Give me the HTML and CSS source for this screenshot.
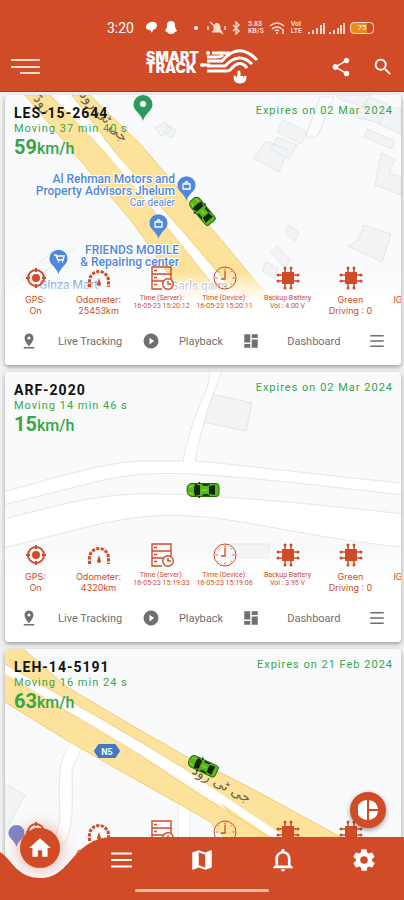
FILE: index.html
```html
<!DOCTYPE html>
<html lang="en">
<head>
  <meta charset="UTF-8" />
  <meta name="viewport" content="width=device-width, initial-scale=1.0"/>
  <title>Smart Track</title>
  <link rel="stylesheet" href="styles.css">
</head>
<body>
  <!-- shared icons -->
  <svg class="defs" aria-hidden="true">
    <symbol id="gps" viewBox="0 0 24 24">
      <circle cx="12" cy="12" r="8" fill="none" stroke="currentColor" stroke-width="2"/>
      <circle cx="12" cy="12" r="4" fill="currentColor"/>
      <path d="M12 2v4M12 18v4M2 12h4M18 12h4" stroke="currentColor" stroke-width="2"/>
    </symbol>
    <symbol id="odo" viewBox="0 0 24 24">
      <path d="M2.500 21v-6a9.500 9.500 0 0 1 19 0v6" fill="none" stroke="currentColor" stroke-width="3" stroke-dasharray="3.200 1.300"/>
      <path d="M12 12l2 6a2 2 0 1 1-4 0z" fill="currentColor"/>
    </symbol>
    <symbol id="server" viewBox="0 0 24 24">
      <g fill="none" stroke="currentColor" stroke-width="1.400">
        <path d="M12 23H2V1h19v12M2 8h19M2 15h12M4 4.500h3M4 11.500h3M4 18.500h3"/>
        <circle cx="18" cy="18" r="5.300"/><path d="M18 15v3h3"/>
      </g>
    </symbol>
    <symbol id="clock" viewBox="0 0 24 24">
      <g fill="none" stroke="currentColor" stroke-width="1">
        <circle cx="12" cy="12" r="11"/>
        <path d="M12 5v8H8" stroke-width="1.300"/>
        <path d="M12 2.500v2M12 19.500v2M2.500 12h2M19.500 12h2M5.300 5.300l1 1M17.700 17.700l1 1M18.700 5.300l-1 1M5.300 18.700l1-1"/>
      </g>
    </symbol>
    <symbol id="chip" viewBox="0 0 24 24">
      <rect x="6" y="6" width="12" height="12" fill="currentColor"/>
      <path d="M9 2v20M15 2v20M2 9h20M2 15h20" stroke="currentColor" stroke-width="1.600"/>
      <g fill="currentColor">
        <circle cx="9" cy="2" r="1.500"/><circle cx="15" cy="2" r="1.500"/><circle cx="9" cy="22" r="1.500"/><circle cx="15" cy="22" r="1.500"/>
        <circle cx="2" cy="9" r="1.500"/><circle cx="2" cy="15" r="1.500"/><circle cx="22" cy="9" r="1.500"/><circle cx="22" cy="15" r="1.500"/>
      </g>
    </symbol>
    <symbol id="key" viewBox="0 0 24 24">
      <circle cx="12" cy="13" r="8" fill="none" stroke="currentColor" stroke-width="2"/>
      <path d="M12 3v9" stroke="currentColor" stroke-width="2"/>
    </symbol>
    <symbol id="marker" viewBox="0 0 24 24">
      <path fill="currentColor" d="M18 8c0-3.310-2.690-6-6-6S6 4.690 6 8c0 4.500 6 11 6 11s6-6.500 6-11zm-8 0a2 2 0 1 1 4 0 2 2 0 0 1-4 0zM5 20v2h14v-2z"/>
    </symbol>
    <symbol id="play" viewBox="0 0 24 24">
      <path fill="currentColor" d="M12 2a10 10 0 1 0 0 20 10 10 0 0 0 0-20zm-2 14.500v-9l6 4.500z"/>
    </symbol>
    <symbol id="dash" viewBox="0 0 24 24">
      <path fill="currentColor" d="M3 3h8v11H3zM3 16h8v5H3zM13 10h8v11h-8zM13 3h8v5h-8z"/>
    </symbol>
    <symbol id="menu" viewBox="0 0 24 24">
      <path d="M3 5h18M3 12h18M3 19h18" stroke="currentColor" stroke-width="2"/>
    </symbol>
    <symbol id="car" viewBox="0 0 34 16">
      <path d="M5 1.500h25q3 0 3 3v7q0 3-3 3H6Q1 14 1 8t4-6.500z" fill="#58b818" stroke="#246b08"/>
      <path d="M9 2l5 1.500v9L9 14q-2-6 0-12z" fill="#14240f"/>
      <path d="M16 2h8l-2 2h-5zM16 14h8l-2-2h-5z" fill="#1d3a12"/>
      <path d="M23 4l6-1v10l-6-1z" fill="#14240f"/>
      <path d="M13 0l1 2M13 16l1-2" stroke="#14240f" stroke-width="1.500"/>
      <path d="M3 5l4-1M3 11l4 1M16 8h5" stroke="#9be04a"/>
    </symbol>
    <symbol id="pin" viewBox="0 0 20 26">
      <path fill="currentColor" d="M10 0a9.500 9.500 0 0 1 9.500 9.500C19.500 16 12 18 10 26 8 18 .5 16 .5 9.500A9.500 9.500 0 0 1 10 0z"/>
    </symbol>
    <linearGradient id="fade" x1="0" y1="0" x2="0" y2="1">
      <stop offset="0" stop-color="#fff" stop-opacity="0"/>
      <stop offset="1" stop-color="#fff"/>
    </linearGradient>
  </svg>

  <header class="header">
    <div class="status">
      <span class="time">3:20</span>
      <svg width="44" height="14" viewBox="0 0 44 14" fill="#fff">
        <path d="M6 1q5-1 6 3 0 4-4 5l-1 3-2-3Q0 9 1 5q1-3 5-4z"/>
        <path d="M26 0q4 0 4 4v2l2 4-2 1q-1 2-4 2t-4-2l-2-1 2-4V4q0-4 4-4z"/>
      </svg>
      <span class="dot"></span>
      <svg width="36" height="14" viewBox="0 0 36 14" fill="none" stroke="#fbd9cc">
        <path d="M5 11h10l-2-3V6q0-3-3-4-3 1-3 4v3z" fill="#fbd9cc"/>
        <path d="M3 1l13 12M1 5v4M18 5v4" stroke-width="1.400"/>
        <path d="M26 4l6 6-3 3V1l3 3-6 6" stroke-width="1.400"/>
      </svg>
      <span class="tiny">5.83<br>KB/S</span>
      <svg width="17" height="14" viewBox="0 0 17 14" fill="none" stroke="#fbd9cc" stroke-width="1.600">
        <path d="M1 5q7-6 14 0M3 8q5-4 10 0M6 10q2-2 4 0"/><path d="M8 11v2M14 8v5"/>
      </svg>
      <span class="tiny">VoI<br>LTE</span>
      <svg width="38" height="14" viewBox="0 0 38 14" stroke="#fbd9cc" stroke-width="2">
        <path d="M2 13v-2M6 13V9M10 13V7M14 13V4M17 13V2M23 13v-2M27 13V9M31 13V7M34 13V4M37 13V2"/>
      </svg>
      <span class="battery">75</span>
    </div>
    <div class="appbar">
      <button class="icon-btn" aria-label="Open menu">
        <svg width="30" height="18" viewBox="0 0 30 18" stroke="#fbd9cc" stroke-width="2"><path d="M0 2h29M0 9h29M9 15h20"/></svg>
      </button>
      <div class="logo">
        <h1>SMART<br>TRACK</h1>
        <svg width="60" height="36" viewBox="0 0 60 36" fill="none" stroke="#fff">
          <circle cx="9" cy="4" r="2" fill="#fff" stroke="none"/>
          <circle cx="3" cy="16" r="2" fill="#fff" stroke="none"/>
          <path d="M13 4h18M8 8h10q4 0 6-2M8 12h15Q40-8 58 11M8 17h18Q40 2 53 15M3 16h8M8 22h20q3 0 5-3 8-9 15 0" stroke-width="3"/>
          <path d="M40 23v6M36 28q0 5 5 5 5 0 5-5" stroke-width="3" stroke-linecap="round"/>
          <path d="M38 27h6v5h-6z" fill="#fff" stroke="none"/>
        </svg>
      </div>
      <div class="tools">
        <button class="icon-btn" aria-label="Share">
          <svg width="22" height="22" viewBox="0 0 24 24" fill="#fff"><path d="M18 16.100c-.8 0-1.400.3-2 .8l-7.100-4.200a3 3 0 0 0 0-1.400L16 7.200A3 3 0 1 0 15 5l.1.700L8 9.800a3 3 0 1 0 0 4.400l7.100 4.200-.1.600a3 3 0 1 0 3-2.900z"/></svg>
        </button>
        <button class="icon-btn" aria-label="Search">
          <svg width="22" height="22" viewBox="0 0 24 24" fill="#fff"><path d="M15.500 14h-.8l-.3-.3A6.500 6.500 0 1 0 13.700 14.400l.3.300v.8l5 5 1.500-1.500zm-6 0a4.500 4.500 0 1 1 0-9 4.500 4.500 0 0 1 0 9z"/></svg>
        </button>
      </div>
    </div>
  </header>

  <main class="list">
    <article class="card">
      <svg class="map" viewBox="0 0 396 270" preserveAspectRatio="xMidYMin slice" aria-hidden="true">
        <g fill="#f1f3f4" stroke="#e3e6e8">
          <path d="M261 46l22 9-9 22-26-14zM278 25l24 12-6 12-24-12zM272 42l20 8-8 14-18-10z"/>
          <path d="M315 2l-14 38q5 6 12 0l16-38z" fill="#fafbfc"/>
          <path d="M330 0h35l-6 12-24-8zM350 22l14-20 20 8-9 18zM373 20l18-8 5 3v24l-23-10zM362 34l28 12-3 8-28-12zM376 58l14 6-6 14 12 4v18l-26-10zM353 145l6-15 27 9-9 28-34-16z"/>
          <path d="M280 138l4-8 10 8-4 8zM266 158l6-7 13 14-5 8zM257 176l4-9 12 6-4 10z"/>
          <path d="M150 33l10-6 6 8-10 6zM163 30l8 5-4 8-8-5z"/>
        </g>
        <path d="M0 200l52-48M0 208l70-55" stroke="#e3e6e8"/>
        <path d="M20 0h25l72 75 43 55 60 75h-38l-54-77zM67 0h18l53 52 66 78 68 82h-30l-59-70-58-65z" fill="#fde29b" stroke="#f2cf78"/>
        <path d="M56 0l65 76 49 59 62 74" fill="none" stroke="#fff" stroke-width="7"/>
        <g class="road-name">
          <text transform="translate(28 4) rotate(50)">روڈ</text>
          <text transform="translate(74 0) rotate(48)">جی ٹی روڈ</text>
        </g>
        <g color="#2c9a5a"><use href="#pin" x="128" y="0" width="20" height="26"/><circle cx="138" cy="9" r="3" fill="#fff"/></g>
        <g color="#5087e0">
          <use href="#pin" x="172" y="81" width="19" height="25"/>
          <use href="#pin" x="144" y="119" width="19" height="25"/>
          <use href="#pin" x="44" y="154" width="19" height="26"/>
        </g>
        <g fill="none" stroke="#fff" stroke-width="1.300">
          <path d="M178 89h7v5h-7zM179.500 89q2-5 4 0M150 127h7v5h-7zM151.500 127q2-5 4 0"/>
          <path d="M49 160h2l2 5h5l1-4h-7M53 167h1M57 167h1" stroke-width="1.600"/>
        </g>
        <g class="place">
          <text x="170" y="88" text-anchor="end">Al Rehman Motors and</text>
          <text x="170" y="100" text-anchor="end">Property Advisors Jhelum</text>
          <text x="170" y="111" text-anchor="end" class="sub">Car dealer</text>
          <text x="174" y="159" text-anchor="end">FRIENDS MOBILE</text>
          <text x="174" y="171" text-anchor="end">&amp; Repairing center</text>
          <text x="34" y="194">Ginza Mart</text>
          <text x="165" y="195" class="grey">Garls qaim</text>
        </g>
        <use href="#car" x="-16" y="-8" width="32" height="16" transform="translate(197 116) rotate(50)"/>
        <rect y="176" width="396" height="30" fill="url(#fade)"/>
        <rect y="205" width="396" height="65" fill="#fff"/>
      </svg>
      <div class="top">
        <div>
          <h2>LES-15-2644</h2>
          <p class="state">Moving 37 min 40 s</p>
          <p class="speed"><b>59</b>km/h</p>
        </div>
        <p class="expires">Expires on 02 Mar 2024</p>
      </div>
      <div class="metrics">
        <div><svg><use href="#gps"/></svg>GPS:<br>On</div>
        <div><svg><use href="#odo"/></svg>Odometer:<br>25453km</div>
        <div class="small"><svg><use href="#server"/></svg>Time (Server):<br>16-05-23 15:20:12</div>
        <div class="small"><svg><use href="#clock"/></svg>Time (Device):<br>16-05-23 15:20:11</div>
        <div class="small"><svg><use href="#chip"/></svg>Backup Battery<br>Vol : 4.00 V</div>
        <div><svg><use href="#chip"/></svg>Green<br>Driving : 0</div>
        <div><svg><use href="#key"/></svg>IGNITION</div>
      </div>
      <div class="actions">
        <button><svg><use href="#marker"/></svg><span>Live Tracking</span></button>
        <button><svg><use href="#play"/></svg><span>Playback</span></button>
        <button><svg><use href="#dash"/></svg><span>Dashboard</span></button>
        <button aria-label="More"><svg><use href="#menu"/></svg></button>
      </div>
    </article>

    <article class="card">
      <svg class="map" viewBox="0 0 396 270" preserveAspectRatio="xMidYMin slice" aria-hidden="true">
        <path d="M203 21l44 10-6 28-43-9z" fill="#f1f3f4" stroke="#e3e6e8"/>
        <path d="M220 172h44v14h-44z" fill="#f1f3f4" stroke="#e3e6e8"/>
        <g fill="#fff" stroke="#e3e6e8">
          <path d="M205-3c0 26-16 34-27 93h12c7-40 18-70 28-93z"/>
          <path d="M-2 120C60 103 100 90 140 89h50c60 5 140 16 208 22v12C320 114 250 106 200 103c-50-4-80 0-110 7L-2 133z"/>
          <path d="M-2 147C40 137 80 124 130 122c60-2 200 12 268 20v33C320 168 250 150 200 145c-50-4-70 0-110 8L-2 176z"/>
        </g>
        <path d="M179 88h10v4h-10z" fill="#fff"/>
        <use href="#car" x="181" y="110" width="34" height="16"/>
        <rect y="176" width="396" height="30" fill="url(#fade)"/>
        <rect y="205" width="396" height="65" fill="#fff"/>
      </svg>
      <div class="top">
        <div>
          <h2>ARF-2020</h2>
          <p class="state">Moving 14 min 46 s</p>
          <p class="speed"><b>15</b>km/h</p>
        </div>
        <p class="expires">Expires on 02 Mar 2024</p>
      </div>
      <div class="metrics">
        <div><svg><use href="#gps"/></svg>GPS:<br>On</div>
        <div><svg><use href="#odo"/></svg>Odometer:<br>4320km</div>
        <div class="small"><svg><use href="#server"/></svg>Time (Server):<br>16-05-23 15:19:33</div>
        <div class="small"><svg><use href="#clock"/></svg>Time (Device):<br>16-05-23 15:19:06</div>
        <div class="small"><svg><use href="#chip"/></svg>Backup Battery<br>Vol : 3.95 V</div>
        <div><svg><use href="#chip"/></svg>Green<br>Driving : 0</div>
        <div><svg><use href="#key"/></svg>IGNITION</div>
      </div>
      <div class="actions">
        <button><svg><use href="#marker"/></svg><span>Live Tracking</span></button>
        <button><svg><use href="#play"/></svg><span>Playback</span></button>
        <button><svg><use href="#dash"/></svg><span>Dashboard</span></button>
        <button aria-label="More"><svg><use href="#menu"/></svg></button>
      </div>
    </article>

    <article class="card">
      <svg class="map" viewBox="0 0 396 270" preserveAspectRatio="xMidYMin slice" aria-hidden="true">
        <path d="M-2 133l22 13-22 42z" fill="#f1f3f4" stroke="#e3e6e8"/>
        <path d="M67 92C54 110 53 120 55 170l-6 24h10c8-10 9-30 8-74l10-22zM173 150v45h12v-45z" fill="#fff" stroke="#e3e6e8"/>
        <path d="M-2-2h18l46 40 66 39 54 31c50 22 80 40 172 90h-94C240 180 220 162 200 132L138 94 62 50-2 14z" fill="#fde29b" stroke="#f2cf78"/>
        <path d="M-2 23l64 39 76 46 58 38 80 50h-50l-22-24-76-43-65-37L-2 52z" fill="#fde29b" stroke="#f2cf78"/>
        <path d="M-2 19l64 38 76 44 62 38 84 56" fill="none" stroke="#fff" stroke-width="8"/>
        <path d="M94 96h16l4 6-4 6H94l-4-6z" fill="#4379c4" stroke="#4379c4" stroke-width="2" stroke-linejoin="round"/>
        <text x="102" y="106" class="route" text-anchor="middle">N5</text>
        <g class="road-name"><text transform="translate(186 124) rotate(28)">جی ٹی روڈ</text></g>
        <use href="#car" x="-16" y="-8" width="32" height="16" transform="translate(198 117) rotate(25)"/>
        <g color="#7c86cf"><use href="#pin" x="3" y="176" width="17" height="22"/></g>
      </svg>
      <div class="top">
        <div>
          <h2>LEH-14-5191</h2>
          <p class="state">Moving 16 min 24 s</p>
          <p class="speed"><b>63</b>km/h</p>
        </div>
        <p class="expires">Expires on 21 Feb 2024</p>
      </div>
      <div class="metrics">
        <div><svg><use href="#gps"/></svg></div>
        <div><svg><use href="#odo"/></svg>Odometer:</div>
        <div class="small"><svg><use href="#server"/></svg>Time (Server):</div>
        <div class="small"><svg><use href="#clock"/></svg>Time (Device):</div>
        <div class="small"><svg><use href="#chip"/></svg>Backup Battery</div>
        <div><svg><use href="#chip"/></svg>Green</div>
      </div>
    </article>
  </main>

  <button class="fab" aria-label="Statistics">
    <svg width="20" height="20" viewBox="0 0 20 20" fill="#fff"><path d="M9 0v20A10 10 0 0 1 9 0zM11 0q8 1 9 9h-9zM11 11h9q-1 8-9 9z"/></svg>
  </button>

  <nav class="nav">
    <svg class="dip" width="120" height="63" viewBox="0 0 120 63" aria-hidden="true">
      <path fill="#d14b27" d="M0 15C12 22 16 41 41 41 72 41 72 0 114 0h6V63H0z"/>
    </svg>
    <a href="#" class="home" aria-label="Home"><svg viewBox="0 0 24 24"><path d="M10 20v-6h4v6h5v-8h3L12 3 2 12h3v8z"/></svg></a>
    <a href="#" aria-label="Vehicles"><svg viewBox="0 0 24 24"><path d="M3 5h19v2H3zM3 11h19v2H3zM3 17h19v2H3z"/></svg></a>
    <a href="#" aria-label="Map"><svg viewBox="0 0 24 24"><path d="M20.500 3l-.2 0L15 5.100 9 3 3.400 4.900c-.2.100-.4.300-.4.500v15.100c0 .3.200.5.500.5l.2 0L9 18.900l6 2.100 5.600-1.900c.2-.1.400-.3.400-.5V3.500c0-.3-.2-.5-.5-.5zM15 19l-6-2.100V5l6 2.100z"/></svg></a>
    <a href="#" aria-label="Alerts"><svg viewBox="0 0 24 24"><path d="M12 22.500a2 2 0 0 0 2-2h-4a2 2 0 0 0 2 2zm7-6V11c0-3.500-2-6-5.500-7V3a1.500 1.500 0 0 0-3 0v1C7 5 5 7.500 5 11v5.500l-2 2v1h18v-1zm-2.500.5h-9v-6c0-3 1.500-5 4.500-5s4.500 2 4.500 5z"/></svg></a>
    <a href="#" aria-label="Settings"><svg viewBox="0 0 24 24"><path d="M19.400 13a7.500 7.500 0 0 0 0-2l2.100-1.600c.2-.2.200-.4.100-.6l-2-3.500c-.1-.2-.4-.3-.6-.2l-2.500 1c-.5-.4-1.100-.7-1.700-1l-.4-2.600c0-.3-.2-.5-.5-.5h-4c-.2 0-.5.200-.5.400L9.100 5.100c-.6.200-1.200.6-1.700 1l-2.500-1c-.2-.1-.5 0-.6.200l-2 3.500c-.1.200-.1.500.1.600L4.600 11a7.500 7.500 0 0 0 0 2l-2.100 1.600c-.2.200-.2.400-.1.600l2 3.500c.1.200.4.300.6.200l2.500-1c.5.400 1.100.7 1.700 1l.4 2.600c0 .3.200.5.500.5h4c.2 0 .5-.2.500-.4l.4-2.700c.6-.2 1.200-.6 1.700-1l2.500 1c.2.100.5 0 .6-.2l2-3.500c.1-.2.100-.5-.1-.6zM12 15.500a3.500 3.500 0 1 1 0-7 3.500 3.500 0 0 1 0 7z"/></svg></a>
    <span class="gesture"></span>
  </nav>
</body>
</html>
```
FILE: styles.css
```css
* {
  box-sizing: border-box;
}
body {
  margin: 0;
  height: 100vh;
  display: flex;
  flex-direction: column;
  background: #f0f0f0;
  font-family: Roboto, sans-serif;
  overflow: hidden;
}
h1, h2, p {
  margin: 0;
}
button {
  border: none;
  padding: 0;
  background: none;
  font-family: inherit;
  cursor: pointer;
}
.defs {
  position: absolute;
  width: 0;
  height: 0;
}

/* header */
.header {
  background: #d14b27;
  color: #fff;
  border-bottom: 1px solid #c63000;
}
.status {
  display: flex;
  align-items: center;
  justify-content: flex-end;
  gap: 5px;
  height: 42px;
  padding: 14px 30px 0 0;
}
.time {
  font-size: 14px;
  margin-right: 6px;
}
.dot {
  width: 4px;
  height: 4px;
  margin-right: 4px;
  border-radius: 50%;
  background: #fff;
}
.tiny {
  font-size: 7px;
  line-height: 7px;
  font-weight: 700;
  color: #fbd9cc;
}
.battery {
  width: 24px;
  height: 12px;
  border: 1px solid #fbd9cc;
  border-radius: 4px;
  background: linear-gradient(to right, #e88a1c 75%, transparent 75%);
  font-size: 8px;
  line-height: 10px;
  text-align: center;
}
.appbar {
  display: grid;
  grid-template-columns: 1fr auto 1fr;
  align-items: center;
  height: 49px;
  padding: 0 10px 0 11px;
}
.icon-btn {
  display: flex;
}
.logo {
  display: flex;
  align-items: center;
}
.logo h1 {
  font-family: Inter, sans-serif;
  font-size: 14px;
  line-height: 11px;
  font-weight: 900;
  padding-bottom: 10px;
}
.tools {
  display: flex;
  justify-content: flex-end;
  gap: 20px;
}

/* vehicle cards */
.list {
  flex: 1;
  min-height: 0;
  display: flex;
  flex-direction: column;
  gap: 7px;
  padding: 3px 3px 0 5px;
  overflow-y: auto;
  scrollbar-width: none;
}
.card {
  position: relative;
  flex: none;
  min-height: 270px;
  border-radius: 4px;
  background: #f9fafb;
  box-shadow: 0 2px 4px rgba(0, 0, 0, 0.35);
  overflow: hidden;
}
.map {
  position: absolute;
  top: 0;
  left: 0;
  width: 100%;
  height: 100%;
}
.place {
  font-size: 12px;
  font-weight: 500;
  fill: #5087e0;
  stroke: #fff;
  stroke-width: 2px;
  paint-order: stroke;
}
.place .sub {
  font-size: 10px;
  font-weight: 400;
}
.place .grey {
  fill: #a3a6ab;
}
.road-name {
  font-family: "DejaVu Sans", sans-serif;
  font-size: 14px;
  fill: #6d5f4c;
}
.route {
  font-size: 9px;
  font-weight: 700;
  fill: #fff;
}
.top {
  position: relative;
  display: flex;
  justify-content: space-between;
  height: 168px;
  padding: 9px 8px 0 9px;
  color: #36a647;
}
.top h2 {
  font-size: 14px;
  line-height: 18px;
  font-weight: 700;
  letter-spacing: 1px;
  color: #111;
}
.state, .expires {
  font-size: 11px;
  line-height: 14px;
  font-weight: 400;
  letter-spacing: 1px;
}
.speed {
  display: flex;
  align-items: baseline;
  font-size: 16px;
  line-height: 22px;
  font-weight: 500;
}
.speed b {
  width: 23px;
  font-size: 20px;
}
.metrics {
  position: relative;
  display: grid;
  grid-auto-flow: column;
  grid-auto-columns: 63px;
  height: 60px;
  margin-left: -1px;
  overflow: hidden;
  font-family: Inter, sans-serif;
  font-size: 9px;
  line-height: 11px;
  text-align: center;
  white-space: nowrap;
  color: #d14b27;
}
.metrics svg {
  display: block;
  width: 24px;
  height: 24px;
  margin: 3px auto 4px;
}
.metrics .small {
  font-family: Roboto, sans-serif;
  font-size: 7px;
  line-height: 8px;
}
.actions {
  position: relative;
  display: grid;
  grid-template-columns: 122fr 99fr 126fr 18px;
  align-items: center;
  height: 36px;
  padding: 0 15px;
}
.actions button {
  display: flex;
  align-items: center;
  font-size: 11px;
  color: #6f6f6f;
}
.actions svg {
  width: 18px;
  height: 18px;
}
.actions span {
  flex: 1;
  text-align: center;
}

/* floating button and bottom bar */
.fab {
  position: fixed;
  right: 18px;
  bottom: 72px;
  width: 36px;
  height: 36px;
  display: flex;
  align-items: center;
  justify-content: center;
  border-radius: 50%;
  background: #d14b27;
  box-shadow: 0 2px 5px rgba(0, 0, 0, 0.4);
}
.nav {
  position: fixed;
  left: 0;
  right: 0;
  bottom: 0;
  display: grid;
  grid-template-columns: repeat(5, 1fr);
  height: 63px;
  padding-bottom: 17px;
  background: linear-gradient(#d14b27, #d14b27) 119px 0 no-repeat;
}
.nav a {
  position: relative;
  display: flex;
  align-items: center;
  justify-content: center;
}
.nav a svg {
  width: 26px;
  height: 26px;
  fill: #fff;
}
.dip {
  position: absolute;
  left: 0;
  bottom: 0;
}
.nav .home {
  width: 40px;
  height: 40px;
  margin: -9px auto 0;
  border-radius: 50%;
  background: #d14b27;
  box-shadow: 0 0 16px rgba(209, 75, 39, 0.5);
}
.gesture {
  position: absolute;
  left: 50%;
  bottom: 8px;
  width: 134px;
  height: 3px;
  margin-left: -67px;
  border-radius: 2px;
  background: #f7b9a4;
}
```
